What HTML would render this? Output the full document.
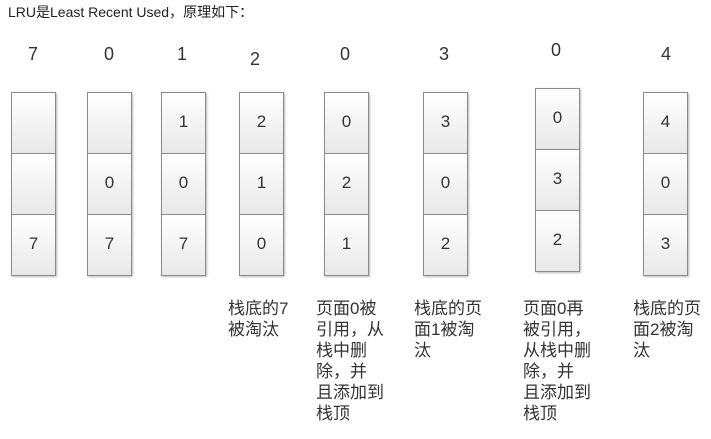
<!DOCTYPE html>
<html><head><meta charset="utf-8"><style>
body{margin:0;width:711px;height:439px;background:#fff;position:relative;overflow:hidden;font-family:"Liberation Sans","Noto Sans CJK SC",sans-serif;color:#333}
.h{position:absolute;left:8px;top:2px;font-size:14px;color:#222}
.n{position:absolute;font-size:18px;color:#333;width:30px;text-align:center;margin-left:-15px}
.col{position:absolute;width:43px;border:1px solid #8a8a8a;box-shadow:1px 1px 2px #bbb}
.c{height:60px;border-top:1px solid #8a8a8a;background:linear-gradient(#fff,#e8e8e8);text-align:center;line-height:58px;font-size:17px;color:#333}
.c:first-child{border-top:none}
.t{position:absolute;font-size:17px;line-height:21px;color:#333;white-space:pre}
</style></head><body>
<div class="h">LRU是Least Recent Used，原理如下：</div>
<div class="n" style="left:33px;top:44px">7</div>
<div class="n" style="left:109px;top:44px">0</div>
<div class="n" style="left:182px;top:44px">1</div>
<div class="n" style="left:255px;top:49px">2</div>
<div class="n" style="left:345px;top:44px">0</div>
<div class="n" style="left:444px;top:44px">3</div>
<div class="n" style="left:556px;top:40px">0</div>
<div class="n" style="left:666px;top:44px">4</div>

<div class="col" style="left:11px;top:92px"><div class="c"></div><div class="c"></div><div class="c">7</div></div>
<div class="col" style="left:87px;top:92px"><div class="c"></div><div class="c">0</div><div class="c">7</div></div>
<div class="col" style="left:161px;top:92px"><div class="c">1</div><div class="c">0</div><div class="c">7</div></div>
<div class="col" style="left:239px;top:92px"><div class="c">2</div><div class="c">1</div><div class="c">0</div></div>
<div class="col" style="left:324px;top:92px"><div class="c">0</div><div class="c">2</div><div class="c">1</div></div>
<div class="col" style="left:423px;top:92px"><div class="c">3</div><div class="c">0</div><div class="c">2</div></div>
<div class="col" style="left:535px;top:88px"><div class="c">0</div><div class="c">3</div><div class="c">2</div></div>
<div class="col" style="left:643px;top:92px"><div class="c">4</div><div class="c">0</div><div class="c">3</div></div>

<div class="t" style="left:228px;top:298px">栈底的7
被淘汰</div>
<div class="t" style="left:316px;top:298px">页面0被
引用，从
栈中删
除，并
且添加到
栈顶</div>
<div class="t" style="left:414px;top:298px">栈底的页
面1被淘
汰</div>
<div class="t" style="left:523px;top:298px">页面0再
被引用，
从栈中删
除，并
且添加到
栈顶</div>
<div class="t" style="left:633px;top:298px">栈底的页
面2被淘
汰</div>
</body></html>
